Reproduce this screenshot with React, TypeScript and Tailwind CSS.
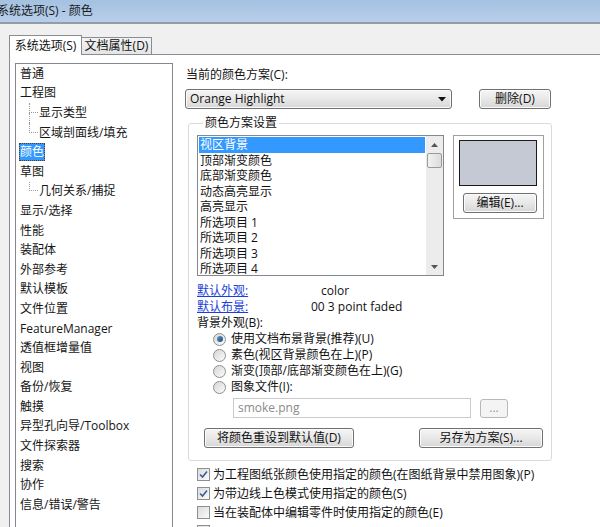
import React from "react";

type TreeItem = { label: string; level: 0 | 1; selected?: boolean; conn?: "mid" | "last" };

const tree: TreeItem[] = [
  { label: "普通", level: 0 },
  { label: "工程图", level: 0 },
  { label: "显示类型", level: 1, conn: "mid" },
  { label: "区域剖面线/填充", level: 1, conn: "last" },
  { label: "颜色", level: 0, selected: true },
  { label: "草图", level: 0 },
  { label: "几何关系/捕捉", level: 1, conn: "last" },
  { label: "显示/选择", level: 0 },
  { label: "性能", level: 0 },
  { label: "装配体", level: 0 },
  { label: "外部参考", level: 0 },
  { label: "默认模板", level: 0 },
  { label: "文件位置", level: 0 },
  { label: "FeatureManager", level: 0 },
  { label: "透值框增量值", level: 0 },
  { label: "视图", level: 0 },
  { label: "备份/恢复", level: 0 },
  { label: "触摸", level: 0 },
  { label: "异型孔向导/Toolbox", level: 0 },
  { label: "文件探索器", level: 0 },
  { label: "搜索", level: 0 },
  { label: "协作", level: 0 },
  { label: "信息/错误/警告", level: 0 },
];

const schemeItems = [
  "视区背景",
  "顶部渐变颜色",
  "底部渐变颜色",
  "动态高亮显示",
  "高亮显示",
  "所选项目 1",
  "所选项目 2",
  "所选项目 3",
  "所选项目 4",
];

const BTN =
  "flex items-center justify-center rounded-[3px] border border-[#707070] bg-gradient-to-b from-[#f5f5f5] via-[#e8e8e8] to-[#d6d6d6] text-[12px] leading-none text-[#111] shadow-[inset_0_0_0_1px_#fbfbfb]";

function Radio({ checked }: { checked?: boolean }) {
  return (
    <span className="flex h-[13px] w-[13px] items-center justify-center rounded-full border border-[#8e8f8f] bg-gradient-to-br from-[#d6d6d6] to-[#fbfbfb]">
      {checked ? <span className="h-[6px] w-[6px] rounded-full bg-gradient-to-br from-[#5d97c7] to-[#1b4c7c]" /> : null}
    </span>
  );
}

function Check({ checked }: { checked?: boolean }) {
  return (
    <span className="flex h-[13px] w-[13px] shrink-0 items-center justify-center border border-[#8e8f8f] bg-gradient-to-br from-[#dcdcdc] to-[#fafafa]">
      {checked ? (
        <svg width="9" height="9" viewBox="0 0 9 9">
          <path d="M1 4.5 L3.5 7 L8 1.5" fill="none" stroke="#3d5b99" strokeWidth="1.6" />
        </svg>
      ) : null}
    </span>
  );
}

export default function App() {
  return (
    <div className="relative h-[527px] w-[600px] overflow-hidden bg-[#f0f0f0] font-['Open_Sans','Noto_Sans_CJK_SC',sans-serif] text-[12px] text-[#111]">
      {/* title bar */}
      <div className="flex h-[24px] items-center border-b-2 border-[#959ca5] bg-gradient-to-b from-[#a4c1e1] to-[#b7cfea]">
        <span className="-ml-[3px] text-[12px] leading-[16px] text-[#1a1a1a]">系统选项(S) - 颜色</span>
      </div>

      {/* tabs */}
      <div className="flex items-end pl-[9px] pt-[11px]">
        <div className="relative z-10 -mb-px flex h-[20px] w-[73px] items-start justify-center border border-b-0 border-[#898c95] bg-white pt-[2px] leading-[16px]">
          系统选项(S)
        </div>
        <div className="flex h-[17px] w-[70px] items-center justify-center border border-b-0 border-l-0 border-[#898c95] bg-gradient-to-b from-[#f3f3f3] to-[#e4e4e4] leading-[16px]">
          文档属性(D)
        </div>
      </div>

      {/* panel */}
      <div className="ml-[9px] flex h-[480px] border-l border-t border-[#898c95] bg-white">
        {/* tree */}
        <div className="ml-[5px] mt-[8px] flex h-[470px] w-[158px] flex-col border border-[#828790] pl-[3px]">
          {tree.map((t) => (
            <div key={t.label} className="flex h-[19.6px] shrink-0 items-center">
              {t.level === 1 ? (
                <div className="ml-[10px] flex h-full w-[9px] flex-col">
                  <div className="h-1/2 border-b border-l border-dotted border-[#9a9a9a]" />
                  <div className={t.conn === "mid" ? "h-1/2 border-l border-dotted border-[#9a9a9a]" : "h-1/2"} />
                </div>
              ) : null}
              <span
                className={
                  t.selected
                    ? "border border-dotted border-[#5a3a1a] bg-[#3399ff] px-[0px] leading-[16px] text-white"
                    : "px-[1px] leading-[16px] text-[#151515]"
                }
              >
                {t.label}
              </span>
            </div>
          ))}
        </div>

        {/* right column */}
        <div className="ml-[12px] flex w-[410px] flex-col">
          <div className="mt-[12px] h-[16px] pl-[1px] leading-[16px]">当前的颜色方案(C):</div>
          <div className="mt-[6px] flex items-center">
            <div className={BTN + " h-[20px] w-[267px] !justify-between px-[4px]"}>
              <span className="text-[12px]">Orange Highlight</span>
              <svg width="8" height="5" viewBox="0 0 8 5" className="mr-[1px]">
                <path d="M0 0 H8 L4 4.5 Z" fill="#111" />
              </svg>
            </div>
            <div className={BTN + " ml-[27px] h-[20px] w-[72px]"}>删除(D)</div>
          </div>

          <fieldset className="ml-[3px] mt-[6px] w-[364px] rounded-[3px] border border-[#d5dde3] pb-[12px] pl-[8px]">
            <legend className="ml-[6px] px-[2px] leading-[16px]">颜色方案设置</legend>
            <div className="mt-[4px] flex items-start">
              {/* listbox */}
              <div className="flex h-[141px] w-[247px] border border-[#828790]">
                <div className="flex w-[228px] flex-col p-[1px]">
                  {schemeItems.map((s, i) => (
                    <div
                      key={s}
                      className={
                        i === 0
                          ? "flex h-[15.5px] shrink-0 items-center bg-[#3399ff] pl-[1px] leading-[15px] text-white"
                          : "flex h-[15.5px] shrink-0 items-center pl-[1px] leading-[15px]"
                      }
                    >
                      {s}
                    </div>
                  ))}
                </div>
                <div className="flex w-[17px] flex-col items-center bg-[#ececec]">
                  <div className="flex h-[17px] items-center justify-center">
                    <svg width="7" height="4" viewBox="0 0 7 4">
                      <path d="M3.5 0 L7 4 H0 Z" fill="#555" />
                    </svg>
                  </div>
                  <div className="h-[15px] w-[15px] rounded-[2px] border border-[#9a9a9a] bg-gradient-to-r from-[#f2f2f2] to-[#dcdcdc]" />
                  <div className="flex-1" />
                  <div className="flex h-[17px] items-center justify-center">
                    <svg width="7" height="4" viewBox="0 0 7 4">
                      <path d="M0 0 H7 L3.5 4 Z" fill="#555" />
                    </svg>
                  </div>
                </div>
              </div>
              {/* preview */}
              <div className="ml-[9px] flex h-[84px] w-[91px] flex-col border border-[#a0a0a0]">
                <div className="ml-[5px] mt-[4px] h-[46px] w-[78px] border border-[#1a1a1a] bg-[#c5c9d3]" />
                <div className={BTN + " ml-[9px] mt-[7px] h-[20px] w-[74px]"}>编辑(E)...</div>
              </div>
            </div>

            <div className="mt-[7px] flex h-[16px] items-center leading-[16px]">
              <span className="w-[124px] text-[#1a3fdb] underline">默认外观:</span>
              <span>color</span>
            </div>
            <div className="flex h-[16px] items-center leading-[16px]">
              <span className="w-[114px] text-[#1a3fdb] underline">默认布景:</span>
              <span>00 3 point faded</span>
            </div>
            <div className="flex h-[16px] items-center leading-[16px]">背景外观(B):</div>

            {[
              ["使用文档布景背景(推荐)(U)", true],
              ["素色(视区背景颜色在上)(P)", false],
              ["渐变(顶部/底部渐变颜色在上)(G)", false],
              ["图象文件(I):", false],
            ].map(([label, checked]) => (
              <div key={label as string} className="ml-[16px] flex h-[16px] items-center gap-[5px] leading-[16px]">
                <Radio checked={checked as boolean} />
                <span>{label as string}</span>
              </div>
            ))}

            <div className="mt-[3px] flex items-center">
              <div className="ml-[36px] flex h-[20px] w-[238px] items-center border border-[#c9cbcf] pl-[4px] text-[#8a8a8a]">
                smoke.png
              </div>
              <div className="ml-[9px] flex h-[19px] w-[28px] items-center justify-center rounded-[3px] border border-[#b5b9bd] bg-[#f4f4f4] text-[#9a9a9a]">
                ...
              </div>
            </div>

            <div className="mt-[10px] flex items-center">
              <div className={BTN + " ml-[7px] h-[20px] w-[150px]"}>将颜色重设到默认值(D)</div>
              <div className={BTN + " ml-[65px] h-[20px] w-[124px]"}>另存为方案(S)...</div>
            </div>
          </fieldset>

          <div className="mt-[4px] flex flex-col">
            {[
              ["为工程图纸张颜色使用指定的颜色(在图纸背景中禁用图象)(P)", true],
              ["为带边线上色模式使用指定的颜色(S)", true],
              ["当在装配体中编辑零件时使用指定的颜色(E)", false],
            ].map(([label, checked]) => (
              <div key={label as string} className="ml-[12px] flex h-[19px] shrink-0 items-center gap-[3px] leading-[16px]">
                <Check checked={checked as boolean} />
                <span>{label as string}</span>
              </div>
            ))}
            <div className="ml-[12px] flex h-[19px] shrink-0 items-center">
              <Check />
            </div>
          </div>
        </div>
      </div>
    </div>
  );
}
